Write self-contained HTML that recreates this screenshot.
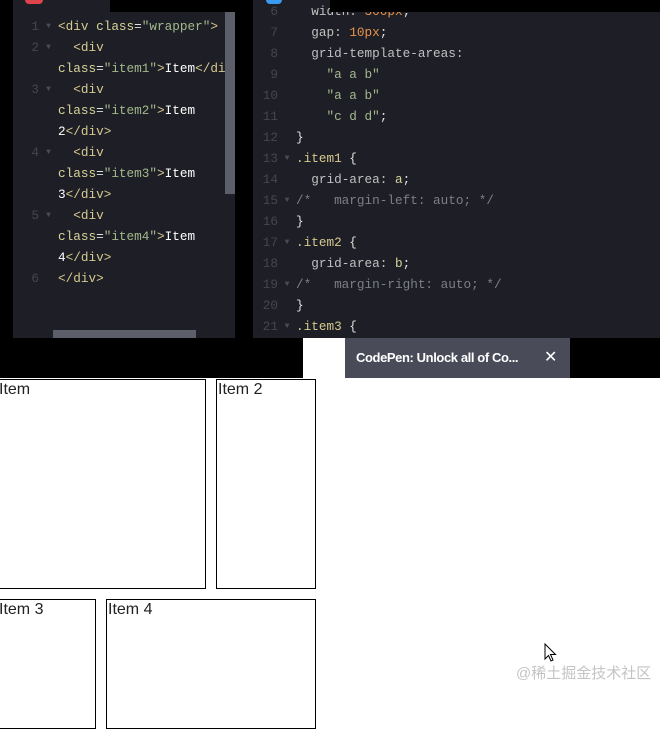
<!DOCTYPE html><html><head><style>
*{margin:0;padding:0;box-sizing:border-box}
body{width:660px;height:697px;overflow:hidden;background:#fff;position:relative;font-family:"Liberation Sans",sans-serif}
.abs{position:absolute}
.code{font-family:"Liberation Mono",monospace;font-size:12.7px;line-height:21px;white-space:pre;color:#e0e0e0}
.ln{color:#44464f;text-align:right;display:inline-block}
.L .ln{width:33px}.R .ln{width:27px}
.g{display:inline-block;color:#4a4c55;font-size:8px;vertical-align:top;text-align:center}
.L .g{width:19px}.R .g{width:18px}
.tg{color:#d6c98f}.at{color:#d9d49a}.st{color:#a3b88c}.pu{color:#a0a0a0}.nu{color:#e8934a}.pr{color:#c0c0c0}.cm{color:#7c7e88}.w{color:#fff}
.box{position:absolute;border:1px solid #000;font-size:16px;color:#222;padding:1px 0 0 1px;line-height:18px}
</style></head><body>
<div class="abs" style="left:0;top:0;width:660px;height:338px;background:#000"></div>
<div class="abs" style="left:13px;top:0;width:222px;height:338px;background:#1e1f26"></div>
<div class="abs" style="left:110px;top:0;width:125px;height:12px;background:#000"></div>
<div class="abs" style="left:25px;top:-6px;width:18px;height:10px;border-radius:4px;background:#e0434b"></div>
<div class="abs" style="left:225px;top:12px;width:10px;height:182px;background:#5c5e6a"></div>
<div class="abs" style="left:53px;top:330px;width:143px;height:8px;background:#5c5e6a"></div>
<div class="abs" style="left:253px;top:0;width:407px;height:338px;background:#1e1f26"></div>
<div class="abs" style="left:330px;top:0;width:330px;height:12px;background:#000"></div>
<div class="abs" style="left:266px;top:-6px;width:16px;height:10px;border-radius:4px;background:#3a9bf0"></div>
<div class="abs code L" style="left:6px;top:16px;"><span class="ln">1</span><span class="g">▼</span><span class="tg">&lt;div</span> <span class="at">class</span>=<span class="st">"wrapper"</span><span class="tg">&gt;</span>
<span class="ln">2</span><span class="g">▼</span>  <span class="tg">&lt;div</span>
<span class="ln"></span><span class="g"></span><span class="at">class</span>=<span class="st">"item1"</span><span class="tg">&gt;</span><span class="w">Item</span><span class="tg">&lt;/di</span>
<span class="ln">3</span><span class="g">▼</span>  <span class="tg">&lt;div</span>
<span class="ln"></span><span class="g"></span><span class="at">class</span>=<span class="st">"item2"</span><span class="tg">&gt;</span><span class="w">Item</span>
<span class="ln"></span><span class="g"></span><span class="w">2</span><span class="tg">&lt;/div&gt;</span>
<span class="ln">4</span><span class="g">▼</span>  <span class="tg">&lt;div</span>
<span class="ln"></span><span class="g"></span><span class="at">class</span>=<span class="st">"item3"</span><span class="tg">&gt;</span><span class="w">Item</span>
<span class="ln"></span><span class="g"></span><span class="w">3</span><span class="tg">&lt;/div&gt;</span>
<span class="ln">5</span><span class="g">▼</span>  <span class="tg">&lt;div</span>
<span class="ln"></span><span class="g"></span><span class="at">class</span>=<span class="st">"item4"</span><span class="tg">&gt;</span><span class="w">Item</span>
<span class="ln"></span><span class="g"></span><span class="w">4</span><span class="tg">&lt;/div&gt;</span>
<span class="ln">6</span><span class="g"></span><span class="tg">&lt;/div&gt;</span></div>
<div class="abs code R" style="left:251px;top:1px;"><span class="ln">6</span><span class="g"></span>  <span class="pr">width: </span><span class="nu">300px</span>;
<span class="ln">7</span><span class="g"></span>  <span class="pr">gap: </span><span class="nu">10px</span>;
<span class="ln">8</span><span class="g"></span>  <span class="pr">grid-template-areas:</span>
<span class="ln">9</span><span class="g"></span>    <span class="st">"a a b"</span>
<span class="ln">10</span><span class="g"></span>    <span class="st">"a a b"</span>
<span class="ln">11</span><span class="g"></span>    <span class="st">"c d d"</span>;
<span class="ln">12</span><span class="g"></span>}
<span class="ln">13</span><span class="g">▼</span><span class="tg">.item1</span> {
<span class="ln">14</span><span class="g"></span>  <span class="pr">grid-area: </span><span class="at">a</span>;
<span class="ln">15</span><span class="g">▼</span><span class="cm">/*   margin-left: auto; */</span>
<span class="ln">16</span><span class="g"></span>}
<span class="ln">17</span><span class="g">▼</span><span class="tg">.item2</span> {
<span class="ln">18</span><span class="g"></span>  <span class="pr">grid-area: </span><span class="at">b</span>;
<span class="ln">19</span><span class="g">▼</span><span class="cm">/*   margin-right: auto; */</span>
<span class="ln">20</span><span class="g"></span>}
<span class="ln">21</span><span class="g">▼</span><span class="tg">.item3</span> {</div>
<div class="abs" style="left:330px;top:0;width:330px;height:12px;background:#000"></div>
<div class="abs" style="left:0;top:338px;width:660px;height:40px;background:#000"></div>
<div class="abs" style="left:303px;top:338px;width:42px;height:40px;background:#fff"></div>
<div class="abs" style="left:345px;top:338px;width:225px;height:40px;background:#4a4b59;color:#fff;font-weight:bold;font-size:13px;line-height:40px;padding-left:11px;letter-spacing:-0.4px">CodePen: Unlock all of Co...<span style="position:absolute;left:199px;font-size:16px;font-weight:normal">✕</span></div>
<div class="box" style="left:-3px;top:379px;width:209px;height:210px">Item</div>
<div class="box" style="left:216px;top:379px;width:100px;height:210px">Item 2</div>
<div class="box" style="left:-3px;top:599px;width:99px;height:130px">Item 3</div>
<div class="box" style="left:106px;top:599px;width:210px;height:130px">Item 4</div>
<svg class="abs" style="left:544px;top:643px" width="14" height="20" viewBox="0 0 14 20"><path d="M1 1 L1 16 L4.5 12.5 L7 18 L9 17 L6.5 11.5 L11.5 11.5 Z" fill="#fff" stroke="#000" stroke-width="1"/></svg>
<div class="abs" style="left:516px;top:662px;font-size:15px;color:#c4c4c4;font-family:'Liberation Sans','Noto Sans CJK SC',sans-serif">@稀土掘金技术社区</div>
</body></html>
